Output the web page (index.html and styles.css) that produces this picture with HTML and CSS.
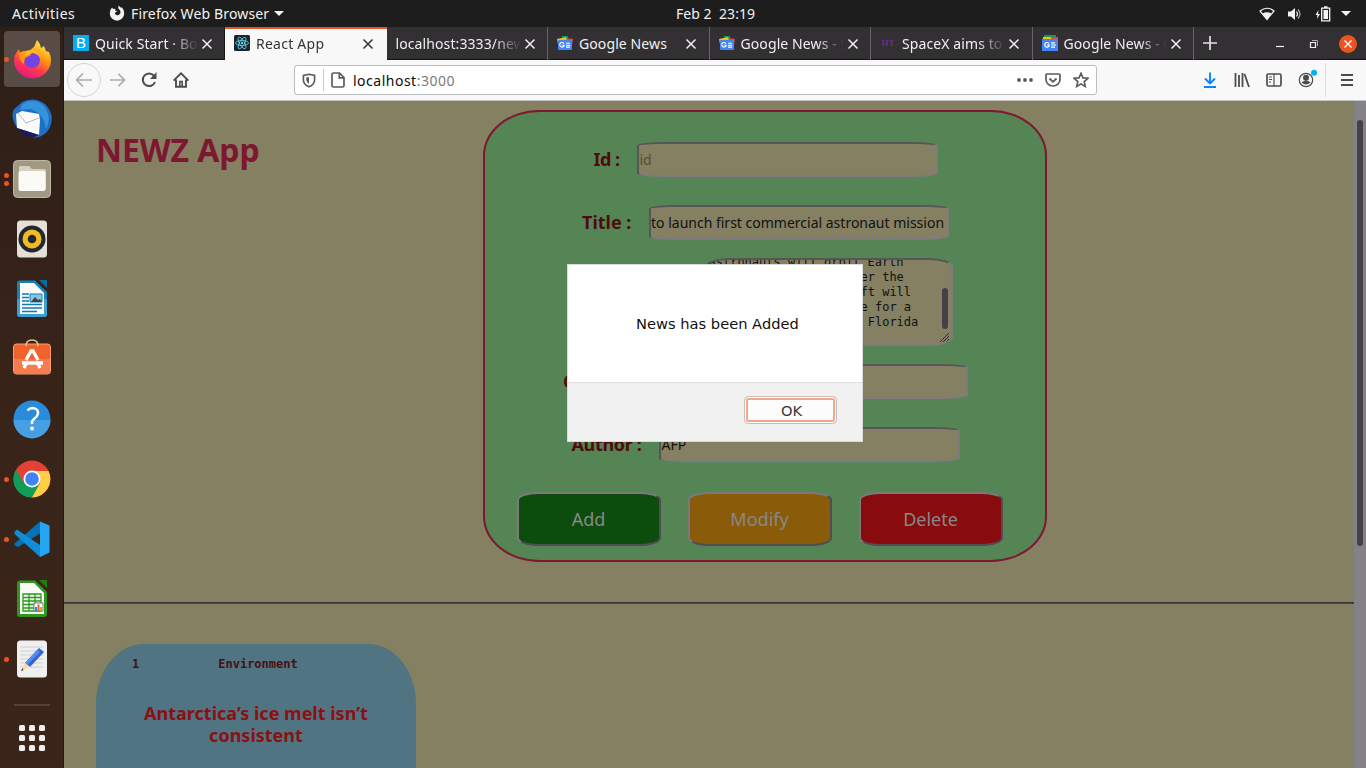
FILE: index.html
```html
<!DOCTYPE html>
<html lang="en">
<head>
<meta charset="utf-8">
<title>React App</title>
<link rel="stylesheet" href="styles.css">
</head>
<body>
<svg class="defs" width="0" height="0">
  <symbol id="close" viewBox="0 0 12 12"><path d="M1.500 1.500l9 9M10.500 1.500l-9 9" fill="none" stroke="currentColor" stroke-width="1.500"/></symbol>
  <symbol id="gnews" viewBox="0 0 16 16"><path d="M5 1h6v4H5z" fill="#0c9d58"/><path d="M0 4l9-2 1 4-9 3z" fill="#fbbc04"/><path d="M10 3l6 1-1 6-5-4z" fill="#ea4335"/><rect x="1" y="5" width="14" height="10" rx="1" fill="#4285f4"/><path d="M7 8.600A2.300 2.300 0 1 0 7.300 10.200H5.300M9 8.300h4M9 10.200h4.500M9 12.100h4" fill="none" stroke="#fff" stroke-width="1.100"/></symbol>
</svg>
<header class="topbar">
  <span class="activities">Activities</span>
  <svg class="fx" width="16" height="16" viewBox="0 0 16 16"><path d="M3 2.500L4.200 4Q5.500 3.500 6.500 4L6 5.500 8.500 6 6.500 7.300Q5.500 8.500 6.500 9.500q1.800 1.500 3.800 0 2-1.800.7-4.200L9.300 3.500 9.500.5 12 2.800 13 2.500Q15.500 5 15.200 8.500A7.200 7.200 0 0 1 .8 8.500Q.8 4.500 3 2.500z" fill="#f2f2f2"/></svg>
  <span class="appname">Firefox Web Browser</span>
  <i class="caret"></i>
  <span class="clock">Feb 2&nbsp; 23:19</span>
  <div class="tray">
    <svg width="16" height="14" viewBox="0 0 16 14"><path d="M1 4Q8-1.500 15 4L8 12.500z" fill="none" stroke="#f2f2f2" stroke-width="1.200"/><path d="M3.500 6.500Q8 4 12.500 6.500L8 12.500z" fill="#f2f2f2"/></svg>
    <svg width="16" height="14" viewBox="0 0 16 14"><path d="M1 4.500h3L8 1v12L4 9.500H1z" fill="#f2f2f2"/><path d="M9.500 4.500q2 2.500 0 5" fill="none" stroke="#f2f2f2" stroke-width="1.200"/><path d="M11 2.500q4 4.500 0 9" fill="none" stroke="#aaa" stroke-width="1.200"/></svg>
    <svg width="16" height="16" viewBox="0 0 16 16"><path d="M3.500 4L0.500 9h2l-.5 4 3-5h-2z" fill="#f2f2f2"/><path d="M6.700 2.200h8v12.600h-8zM9 1h3.500" fill="none" stroke="#f2f2f2" stroke-width="1.300"/><path d="M8.500 4h4.500v9H8.500z" fill="#f2f2f2"/></svg>
    <i class="caret"></i>
  </div>
</header>
<div class="desktop">
  <nav class="dock">
    <div class="app current dot"><svg width="40" height="40" viewBox="0 0 40 40"><defs><linearGradient id="ff" x1=".8" y1="0" x2=".3" y2="1"><stop offset="0" stop-color="#fff44f"/><stop offset=".4" stop-color="#ff980e"/><stop offset=".7" stop-color="#ff3750"/><stop offset="1" stop-color="#e31587"/></linearGradient></defs><path d="M4 14l3-4 1 4q3-3 6-2l4-1 4-3 3-7q3 3 4 8l3-2 2 5 3 1q2 4 2 8a18.500 18.500 0 0 1-37 0q0-4 2-7z" fill="url(#ff)"/><circle cx="20" cy="21" r="8" fill="#7542e5"/><path d="M7 14q3-2 7-1 3 0 5 3l-6 3q-1 4-1 6-6-4-5-11z" fill="#ff980e"/><path d="M13 17l8-3q5 1 7 5-1-6-7-8l-7 1z" fill="#ffb52c"/></svg></div>
    <div class="app"><svg width="40" height="40" viewBox="0 0 40 40"><path d="M10 3Q22-3 33 5q9 9 6 20-3 12-17 14L8 32Q-3 20 2 10q3-2 8-7z" fill="#1f6fc4"/><path d="M14 3q15-4 21 9 4 9-1 18-2-16-16-20l-10 1q1-6 6-8z" fill="#3493dc"/><path d="M4 15l6-3 17 3 1 6-1 15L5 29z" fill="#fbfbfb"/><path d="M6 14l8 10 13-5" fill="none" stroke="#b6b6bd"/><path d="M5 29l22 7-6 3q-10-1-16-10z" fill="#211a58"/></svg></div>
    <div class="app dots"><svg width="40" height="40" viewBox="0 0 40 40"><rect x="1.500" y="1.500" width="37" height="37" rx="4" fill="#a19982" stroke="#bcb6a3"/><path d="M7 8q0-1 2-1h8l3 3h12q2 0 2 2v18H7z" fill="#d7d0c2"/><rect x="6.500" y="12" width="27" height="20" rx="2" fill="#fbfaf7"/></svg></div>
    <div class="app"><svg width="40" height="40" viewBox="0 0 40 40"><rect x="5" y="1.500" width="30" height="37" rx="3.500" fill="#e4e0d5"/><circle cx="20" cy="20" r="13.500" fill="#25252f"/><circle cx="20" cy="20" r="9.500" fill="#efbd21"/><circle cx="20" cy="20" r="4.300" fill="#25252b"/></svg></div>
    <div class="app"><svg width="40" height="40" viewBox="0 0 40 40"><path d="M8 1.500h15L35 13v22q0 3-3 3H8q-3 0-3-3V4q0-2.500 3-2.500z" fill="#187fb7"/><path d="M5 20h30v15q0 3-3 3H8q-3 0-3-3z" fill="#38a0d2"/><path d="M8 4h14l10 10v21H8z" fill="#fafafa"/><path d="M27 1h8v8z" fill="#0b6ba3"/><path d="M10 15h7m-7 3.500h7M10 22h7m-7 3.500h20M10 29h20m-20 3.500h15" stroke="#1378b3" stroke-width="1.500"/><path d="M18 15h12v8H18z" fill="#82c8ec" stroke="#1378b3"/><path d="M19 23l4-5 3 3 2-1 2 3z" fill="#444"/></svg></div>
    <div class="app"><svg width="40" height="40" viewBox="0 0 40 40"><rect x="1.500" y="5" width="37" height="30" rx="3" fill="#f1622d" stroke="#f99c72"/><path d="M2 20h36v12q0 2-2 2H4q-2 0-2-2z" fill="#f47c4e"/><path d="M14 7q0-6 6-6t6 6" fill="none" stroke="#dfc795" stroke-width="1.500"/><path d="M14 21l5-9h2l5 9M10 24h21M12 29l2-4m14 4l-2-4" fill="none" stroke="#fff" stroke-width="3.300"/></svg></div>
    <div class="app"><svg width="40" height="40" viewBox="0 0 40 40"><circle cx="20" cy="20" r="18.500" fill="#298bdc"/><path d="M1.500 21h37a18.500 18.500 0 0 1-37 0z" fill="#459fe2"/><path d="M15.500 11.500q2-2.500 5-2.500 6 .5 5.500 5.500-.5 3-4 5.500-2.500 2-2 5" fill="none" stroke="#fff" stroke-width="2.500"/><circle cx="20" cy="29.500" r="2" fill="#fff"/></svg></div>
    <div class="app dot"><svg width="40" height="40" viewBox="0 0 40 40"><circle cx="20" cy="20" r="18.500" fill="#e34133"/><path d="M4 10.700A18.500 18.500 0 0 0 20 38.500L28 25l-8 3-8-3.500z" fill="#109d58"/><path d="M20 38.500A18.500 18.500 0 0 0 36.500 12H20l8 12z" fill="#ffce43"/><circle cx="20" cy="20" r="8.500" fill="#fff"/><circle cx="20" cy="20" r="6.800" fill="#4384f4"/></svg></div>
    <div class="app dot"><svg width="40" height="40" viewBox="0 0 40 40"><path d="M28 2.500v12L6 28q-2 0-4-3z" fill="#0572b7"/><path d="M5 10.500L28 26v12L2.500 15v-2z" fill="#0e8dd8"/><path d="M28 2.500L37.500 6.500v27L28 38z" fill="#26a6f2"/></svg></div>
    <div class="app"><svg width="40" height="40" viewBox="0 0 40 40"><path d="M8 1.500h15L35 13v22q0 3-3 3H8q-3 0-3-3V4q0-2.500 3-2.500z" fill="#31971b"/><path d="M8 4h14l10 10v21H8z" fill="#fafafa"/><path d="M27 1h8v8z" fill="#1f7d11"/><path d="M11 15h18v17H11zM11 18.500h18M11 22h18M11 25.500h18M11 29h18M17 15v17M23 15v17" fill="none" stroke="#299b1a" stroke-width="1.300"/><path d="M22 24h9v8h-9z" fill="#fff" stroke="#777"/><path d="M24 28v4" stroke="#2490db" stroke-width="2"/><path d="M26.500 25.500v6.500" stroke="#dd641e" stroke-width="2"/><path d="M29 28v4" stroke="#e4a32c" stroke-width="2"/></svg></div>
    <div class="app dot"><svg width="40" height="40" viewBox="0 0 40 40"><rect x="5" y="1.500" width="30" height="37" rx="3.500" fill="#efefef"/><path d="M8 8h23M8 12h23M8 16h23M8 20h23M8 24h23M8 28h23" stroke="#d0d0d0"/><path d="M27 9l5 4-14 15-5-4z" fill="#3464d8"/><path d="M25 11l3 2-13 13-2-2z" fill="#5a8bf2"/><path d="M13 24l5 4-9 4z" fill="#f5d7b3"/><path d="M10.500 29l1 2-2.500 1z" fill="#333"/></svg></div>
    <i class="rule"></i>
    <div class="grid"><i></i><i></i><i></i><i></i><i></i><i></i><i></i><i></i><i></i></div>
  </nav>
  <main class="browser">
    <div class="tabs">
      <div class="tab"><b class="boot">B</b><span class="t t1">Quick Start · Bo</span><svg class="x"><use href="#close"/></svg></div>
      <div class="tab active"><svg class="fav react" viewBox="0 0 16 16"><rect width="16" height="16" rx="1.500" fill="#20232a"/><g fill="none" stroke="#61dafb" stroke-width=".8"><ellipse cx="8" cy="8" rx="6.500" ry="2.500"/><ellipse cx="8" cy="8" rx="6.500" ry="2.500" transform="rotate(60 8 8)"/><ellipse cx="8" cy="8" rx="6.500" ry="2.500" transform="rotate(120 8 8)"/></g><circle cx="8" cy="8" r="1.200" fill="#61dafb"/></svg><span class="t t2">React App</span><svg class="x"><use href="#close"/></svg></div>
      <div class="tab"><span class="t wide">localhost:3333/new</span><svg class="x"><use href="#close"/></svg></div>
      <div class="tab"><svg class="fav"><use href="#gnews"/></svg><span class="t full">Google News</span><svg class="x"><use href="#close"/></svg></div>
      <div class="tab"><svg class="fav"><use href="#gnews"/></svg><span class="t">Google News - S</span><svg class="x"><use href="#close"/></svg></div>
      <div class="tab"><b class="ht">HT</b><span class="t">SpaceX aims to</span><svg class="x"><use href="#close"/></svg></div>
      <div class="tab"><svg class="fav" viewBox="0 0 16 16"><path d="M2 0h12v4H2z" fill="#0c9d58"/><path d="M1 2h8v4H1z" fill="#fbbc04"/><path d="M9 2h7v4H9z" fill="#ea4335"/><path d="M0 4h16v12H0z" fill="#4285f4"/><path d="M7 8.600A2.300 2.300 0 1 0 7.300 10.200H5.300M9 7.800h4M9 10h5M9 12.200h4" fill="none" stroke="#fff" stroke-width="1.200"/></svg><span class="t">Google News - G</span><svg class="x"><use href="#close"/></svg></div>
      <svg class="plus" width="14" height="14" viewBox="0 0 14 14"><path d="M7 0v14M0 7h14" stroke="#e4e4e4" stroke-width="1.700"/></svg>
      <div class="wm">
        <svg width="10" height="10"><path d="M1 7.500h8" stroke="#eee" stroke-width="1.200"/></svg>
        <svg width="10" height="10"><path d="M1.500 3.500h5v5h-5z" fill="none" stroke="#eee" stroke-width="1.200"/><path d="M3 1.500h5.500V7" fill="none" stroke="#aaa"/></svg>
        <span class="quit"><svg width="10" height="10"><path d="M1.500 1.500l7 7M8.500 1.500l-7 7" stroke="#fff" stroke-width="1.300"/></svg></span>
      </div>
    </div>
    <div class="toolbar">
      <span class="back"><svg width="18" height="16" viewBox="0 0 18 16"><path d="M17 8H2M8 1.500L1.500 8 8 14.500" fill="none" stroke="#acacac" stroke-width="1.700"/></svg></span>
      <svg class="fwd" width="17" height="16" viewBox="0 0 18 16"><path d="M1 8h15M10 1.500L16.500 8 10 14.500" fill="none" stroke="#acacac" stroke-width="1.700"/></svg>
      <svg class="reload" width="16" height="16" viewBox="0 0 16 16"><path d="M13 3.800A6.300 6.300 0 1 0 14 10" fill="none" stroke="#4c4c4f" stroke-width="2"/><path d="M15.500 0v7H9z" fill="#4c4c4f"/></svg>
      <svg class="home" width="16" height="16" viewBox="0 0 16 16"><path d="M.6 8.700L8 1.300l7.400 7.400M3 7.500v7.300h10V7.500" fill="none" stroke="#4c4c4f" stroke-width="1.900"/><path d="M6.800 14V9.500h2.400V14" fill="none" stroke="#4c4c4f" stroke-width="1.600"/></svg>
      <div class="url">
        <svg width="14" height="15" viewBox="0 0 14 15"><path d="M7 1.200L12.600 2.500v4.500q0 4.500-5.600 6.800Q1.400 11.500 1.400 7V2.500z" fill="none" stroke="#5a5a5d" stroke-width="1.600"/><path d="M7 4v7q-2.500-1.500-2.700-4V4.500z" fill="#5a5a5d"/></svg>
        <i></i>
        <svg width="14" height="16" viewBox="0 0 14 16"><path d="M2.500 1h6l4.500 4.500v8q0 1.500-1.500 1.500h-9Q1 15 1 13.500v-11Q1 1 2.500 1zM8.300 1v4.800H13" fill="none" stroke="#5a5a5d" stroke-width="1.700"/></svg>
        <span class="addr">localhost<em>:3000</em></span>
        <svg class="end" width="18" height="16"><g fill="#5a5a5d"><circle cx="3" cy="8" r="1.900"/><circle cx="9" cy="8" r="1.900"/><circle cx="15" cy="8" r="1.900"/></g></svg>
        <svg width="16" height="16" viewBox="0 0 16 16"><path d="M2 2h12q1 0 1 1v4.500a7 6.500 0 0 1-14 0V3q0-1 1-1z" fill="none" stroke="#5a5a5d" stroke-width="1.700"/><path d="M4.500 6.500L8 9.800l3.500-3.300" fill="none" stroke="#5a5a5d" stroke-width="1.800"/></svg>
        <svg width="16" height="16" viewBox="0 0 16 16"><path d="M8 1.300l2 4.600 4.900.4-3.700 3.300 1.100 4.900L8 11.900l-4.300 2.600 1.100-4.900L1.100 6.300 6 5.900z" fill="none" stroke="#5a5a5d" stroke-width="1.600"/></svg>
      </div>
      <div class="tools">
        <svg width="16" height="16" viewBox="0 0 16 16"><path d="M8 .5v11M3 6.500l5 5 5-5M2 15h12" fill="none" stroke="#0a84ff" stroke-width="1.900"/></svg>
        <svg width="16" height="16" viewBox="0 0 16 16"><path d="M1.500 1v14M5 3v12M8.500 1v14M10.500 2l4.500 13" fill="none" stroke="#4c4c4f" stroke-width="1.800"/></svg>
        <svg width="16" height="16" viewBox="0 0 16 16"><rect x="1" y="2" width="14" height="12" rx="1.500" fill="none" stroke="#4c4c4f" stroke-width="1.700"/><path d="M8 2v12M3 5h3M3 7.500h3M3 10h2" stroke="#4c4c4f" stroke-width="1.200"/></svg>
        <svg class="acct" width="20" height="20" viewBox="0 0 20 20"><circle cx="8" cy="11" r="6.700" fill="none" stroke="#4c4c4f" stroke-width="1.200"/><circle cx="8" cy="8.700" r="3" fill="#4c4c4f"/><path d="M3.500 13.500q4.500-4 9 0-4.500 4-9 0z" fill="#4c4c4f"/><circle cx="16" cy="3.700" r="3" fill="#00b3f4"/></svg>
        <i></i>
        <svg width="14" height="14"><path d="M1 2h12M1 7h12M1 12h12" stroke="#4c4c4f" stroke-width="1.800"/></svg>
      </div>
    </div>
    <div class="viewport">
      <section class="page">
        <div class="hero">
          <h1>NEWZ App</h1>
          <form class="panel">
            <div class="row r1"><label>Id :</label><div class="field ph"><span>id</span></div></div>
            <div class="row r2"><label>Title :</label><div class="field"><span>to launch first commercial astronaut mission</span></div></div>
            <div class="row r3"><div class="area"><div class="lines"><p>astronauts will orbit Earth</p><div class="rest">er the<br>ft will<br>e for a<br>&nbsp;Florida</div></div><i class="thumb"></i><svg class="grip" width="11" height="11"><path d="M1 10l9-9M4 10l6-6M7 10l3-3" stroke="#333" fill="none"/></svg></div></div>
            <div class="row r4"><label>Category :</label><div class="field"></div></div>
            <div class="row r5"><label>Author :</label><div class="field"><span>AFP</span></div></div>
            <div class="buttons"><button type="button" class="add">Add</button><button type="button" class="modify">Modify</button><button type="button" class="delete">Delete</button></div>
          </form>
        </div>
        <hr>
        <article class="card">
          <div class="meta"><span>1</span><span>Environment</span></div>
          <h2>Antarctica’s ice melt isn’t<br>consistent</h2>
        </article>
      </section>
      <div class="scroll"><i></i></div>
      <div class="dialog">
        <p>News has been Added</p>
        <footer><button type="button">OK</button></footer>
      </div>
    </div>
  </main>
</div>
</body>
</html>
```
FILE: styles.css
```css
* { box-sizing: border-box; }
body { margin: 0; width: 1366px; height: 768px; overflow: hidden; font: 14px "Noto Sans", sans-serif; background: #1d1d1d; }
.defs { position: absolute; }
svg { flex: none; display: block; }

/* system bar */
.topbar { height: 27px; display: flex; align-items: center; background: #1d1d1d; color: #f2f2f2; line-height: 27px; }
.activities { width: 97px; padding-left: 12px; letter-spacing: .5px; }
.fx { margin: 0 6px 2px 12px; }
.appname { width: 139px; white-space: nowrap; letter-spacing: .15px; }
.caret { width: 0; height: 0; margin-left: 4px; border: 5px solid transparent; border-top-color: #f2f2f2; border-bottom: 0; }
.clock { margin-left: 392px; white-space: nowrap; letter-spacing: .05px; }
.tray { margin-left: auto; padding-right: 15px; display: flex; align-items: center; gap: 12px; }
.tray .caret { margin-left: -2px; }

.desktop { display: flex; height: 741px; }

/* launcher */
.dock { width: 64px; padding-top: 4px; display: flex; flex-direction: column; align-items: center; background: linear-gradient(#2e1f17, #392419 55%, #3b251b); box-shadow: inset -1px 0 #241813; }
.app { width: 56px; height: 56px; margin-bottom: 4px; flex: none; display: flex; align-items: center; justify-content: center; border-radius: 4px; position: relative; }
.app.current { background: #594c46; }
.dot::before, .dots::before, .dots::after { content: ""; position: absolute; left: 0; top: 25.500px; width: 5px; height: 5px; border-radius: 50%; background: #e95420; }
.dots::before { top: 21.500px; }
.dots::after { top: 29.500px; }
.rule { width: 36px; height: 2px; margin-top: 13px; background: #554139; }
.grid { margin-top: 19px; display: grid; grid-template-columns: repeat(3, 6px); gap: 4px; }
.grid i { width: 6px; height: 6px; border-radius: 1.500px; background: #f0eeec; }

.browser { width: 1302px; display: flex; flex-direction: column; }

/* tabs */
.tabs { height: 33px; display: flex; align-items: center; background: #323032; border-bottom: 1px solid #151515; flex: none; }
.tab { width: 161.500px; height: 33px; padding-left: 9px; display: flex; align-items: center; color: #f0f0f0; border-right: 1px solid #666467; flex: none; }
.tab:first-child { border-right-color: #151515; width: 161px; }
.tab.active { background: #f8f8f8; color: #333; border-top: 2px solid #e95420; border-right: 0; padding-bottom: 2px; }
.fav, .boot, .ht { width: 16px; height: 16px; flex: none; }
.boot { background: #00aff0; color: #fff; font: 15px/16px "Liberation Sans", sans-serif; text-align: center; }
.ht { color: #6e2a8b; font: bold 9px/16px "Liberation Serif", serif; text-align: center; }
.t { width: 103px; margin-left: 6px; overflow: hidden; white-space: nowrap; flex: none; letter-spacing: .1px; -webkit-mask: linear-gradient(90deg, #000 76px, transparent 103px); mask: linear-gradient(90deg, #000 76px, transparent 103px); }
.t.full { -webkit-mask: none; mask: none; }
.t2 { letter-spacing: .25px; }
.t.wide { width: 125px; margin-left: 0; -webkit-mask: linear-gradient(90deg, #000 98px, transparent 125px); mask: linear-gradient(90deg, #000 98px, transparent 125px); }
.x { width: 12px; height: 12px; margin: 1px 0 0 3px; }
.plus { margin-left: 9px; }
.wm { margin-left: auto; padding: 1px 9px 0 0; display: flex; align-items: center; gap: 24px; }
.quit { width: 18px; height: 18px; margin-left: -4px; border-radius: 50%; background: #e95420; display: flex; align-items: center; justify-content: center; }

/* navigation */
.toolbar { height: 41px; display: flex; align-items: center; background: #f8f8f8; border-bottom: 1px solid #c4c4c6; flex: none; }
.back { width: 34px; height: 34px; margin-left: 3px; border: 1px solid #d5d5d5; border-radius: 50%; display: flex; align-items: center; justify-content: center; }
.fwd { margin-left: 8px; }
.reload { margin-left: 15px; }
.home { margin-left: 16px; }
.url { width: 803px; height: 30px; margin-left: 105px; padding: 0 7px; display: flex; align-items: center; background: #fff; border: 1px solid #bcbcbf; border-radius: 3px; }
.url i { width: 1px; height: 22px; margin: 0 7px; background: #c8c8c8; }
.addr { margin-left: 8px; color: #0c0c0d; letter-spacing: .5px; }
.addr em { font-style: normal; color: #7b7b7b; }
.end { margin-left: auto; }
.url .end ~ svg { margin-left: 12px; }
.url .end + svg { margin-left: 11px; }
.tools { margin-left: auto; padding-right: 12px; display: flex; align-items: center; gap: 16px; }
.tools i { width: 1px; height: 34px; margin-left: -9px; background: #ddd; }
.tools .acct { margin-top: -3px; }
.tools svg:last-child { margin-left: -2px; }

/* page */
.viewport { height: 667px; display: flex; position: relative; overflow: hidden; }
.page { width: 1290px; background: #848061; }
.hero { height: 501px; display: flex; align-items: flex-start; }
h1 { width: 387px; margin: 26px 0 0; padding-left: 32px; font: bold 32px/46px "Noto Sans", sans-serif; letter-spacing: -.1px; color: #7e1731; }
.panel { width: 564px; height: 452px; margin: 9px 0 0 32px; padding: 30px 0 0 1px; display: flex; flex-direction: column; align-items: center; background: #558555; border: 2px solid #7e1731; border-radius: 10%; }
.row { display: flex; align-items: center; gap: 17px; height: 35px; margin-bottom: 28px; flex: none; }
.row label { margin-top: -2px; font-weight: bold; font-size: 18px; color: #4f0c10; white-space: nowrap; }
.r1 label { width: 26px; letter-spacing: -.5px; } .r2 label { width: 50px; } .r4 label { width: 87px; } .r5 label { width: 70px; letter-spacing: -.35px; }
.field, .area { border: 2px solid; border-color: #565558 #7e7a80 #7e7a80 #565558; border-radius: 10%; background: #848061; color: #111; }
.field { width: 301px; height: 35px; padding-left: 1px; line-height: 31px; white-space: nowrap; overflow: hidden; }
.r2 .field { width: 300px; padding-left: 0; }
.ph { color: #504e3b; }
.r3 { height: 88px; margin: -10px 0 18px; padding-left: 126px; }
.area { width: 248px; height: 88px; position: relative; overflow: hidden; }
.lines { margin: -5px 0 0 2px; font: 12px/15px "DejaVu Sans Mono", monospace; white-space: nowrap; }
.lines p { margin: 0; }
.rest { padding-left: 152px; }
.thumb { position: absolute; right: 3px; top: 28px; width: 6px; height: 41px; border-radius: 3px; background: #434145; }
.grip { position: absolute; right: 1px; bottom: 1px; }
.buttons { width: 486px; margin: 2px 12px 0 0; display: flex; justify-content: space-between; }
.buttons button { width: 144px; height: 54px; padding: 0; border: 2px solid; border-color: #7c797c #504e52 #504e52 #7c797c; border-radius: 15%; font: 18px "Noto Sans", sans-serif; color: #888; }
.buttons .add { background: #0c4d0d; }
.buttons .modify { background: #8a5c0a; }
.buttons .delete { background: #880b0d; }
hr { height: 2px; margin: 0; border: 0; background: linear-gradient(#343338 50%, #4a494a 50%); }
.card { width: 320px; height: 400px; margin: 40px 0 0 32px; padding-top: 12px; background: #507481; border-radius: 48px / 60px; }
.meta { padding-left: 36px; display: flex; gap: 79px; font: bold 12px/16px "DejaVu Sans Mono", monospace; color: #481013; }
h2 { margin: 30px 0 0; font: bold 18px/22px "Noto Sans", sans-serif; color: #8b1014; text-align: center; white-space: nowrap; }
.scroll { width: 12px; padding: 19px 0 0 3px; background: #848284; }
.scroll i { display: block; width: 6px; height: 426px; border-radius: 3px; background: #444245; }

/* alert over the page */
.dialog { position: absolute; left: 503px; top: 163px; width: 296px; height: 178px; display: flex; flex-direction: column; background: #fff; border: 1px solid #dadada; }
.dialog p { height: 117px; margin: 0; padding-left: 68px; font: 14.670px/118px "DejaVu Sans", sans-serif; color: #111; white-space: nowrap; }
.dialog footer { flex: 1; padding: 13px 25px 0 0; display: flex; justify-content: flex-end; background: #f1f1f1; border-top: 1px solid #e0e0e0; }
.dialog button { width: 93px; height: 28px; padding: 0 0 0 2px; border: 1px solid #c3bfbc; border-radius: 4px; background: #fcfcfc; box-shadow: inset 0 0 0 1px #fff, inset 0 0 0 3px #f3a688; font: 14.670px "DejaVu Sans", sans-serif; color: #3a3a3a; }
```
